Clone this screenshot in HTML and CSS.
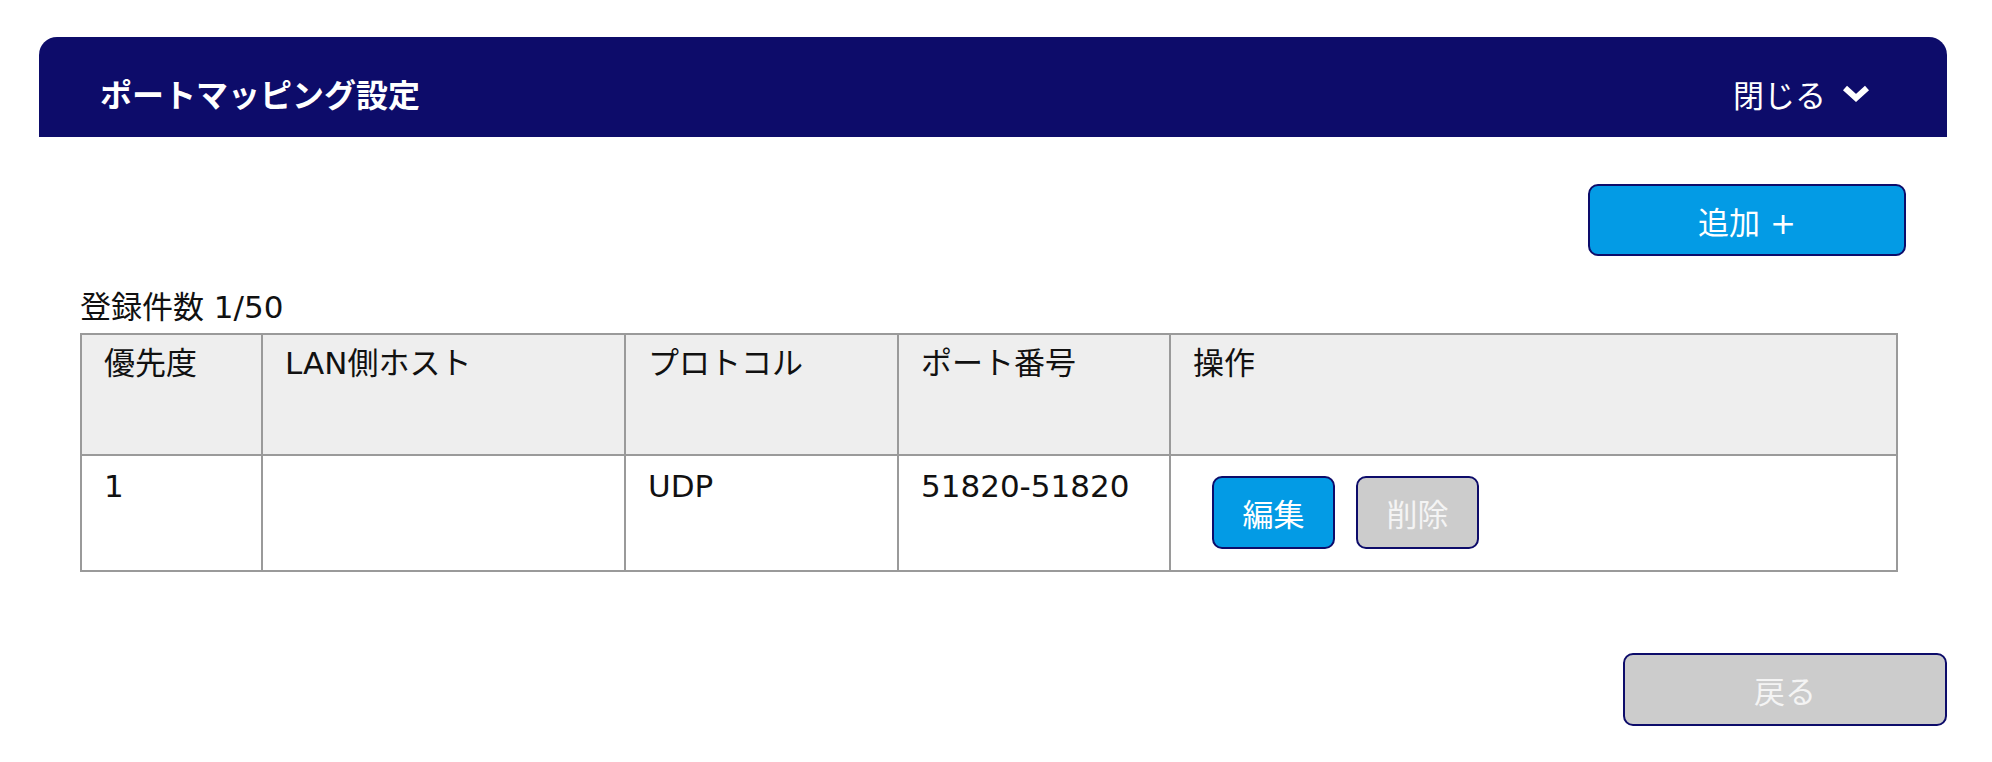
FILE: index.html
```html
<!DOCTYPE html>
<html lang="ja">
<head>
    <meta charset="UTF-8">
    <title>ポートマッピング設定</title>
    <link rel="stylesheet" href="styles.css">
</head>
<body>
    <div class="panel">
        <div class="panel-header">
            <h2 class="panel-title">ポートマッピング設定</h2>
            <button class="close-toggle">
                閉じる
                <svg class="chevron" width="28" height="18" viewBox="0 0 28 18">
                    <polyline points="3,3 14,13 25,3" fill="none" stroke="#fff" stroke-width="6"/>
                </svg>
            </button>
        </div>

        <div class="panel-body">
            <div class="toolbar">
                <button class="btn btn-primary btn-add">追加 +</button>
            </div>

            <p class="count">登録件数 1/50</p>

            <table class="mapping-table">
                <colgroup>
                    <col class="col-priority">
                    <col class="col-host">
                    <col class="col-protocol">
                    <col class="col-port">
                    <col>
                </colgroup>
                <thead>
                    <tr>
                        <th>優先度</th>
                        <th>LAN側ホスト</th>
                        <th>プロトコル</th>
                        <th>ポート番号</th>
                        <th>操作</th>
                    </tr>
                </thead>
                <tbody>
                    <tr>
                        <td>1</td>
                        <td></td>
                        <td>UDP</td>
                        <td>51820-51820</td>
                        <td>
                            <div class="row-actions">
                                <button class="btn btn-primary btn-small">編集</button>
                                <button class="btn btn-disabled btn-small">削除</button>
                            </div>
                        </td>
                    </tr>
                </tbody>
            </table>
        </div>

        <div class="panel-footer">
            <button class="btn btn-disabled btn-back">戻る</button>
        </div>
    </div>
</body>
</html>
```

FILE: styles.css
```css
* {
    margin: 0;
    padding: 0;
    box-sizing: border-box;
}

body {
    background-color: #fff;
    font-family: "DejaVu Sans", "Noto Sans CJK JP", sans-serif;
    color: #111;
}

.panel {
    margin: 37px 45px 0 39px;
}

.panel-header {
    height: 100px;
    background-color: #0d0c6a;
    border-radius: 18px 18px 0 0;
    display: flex;
    justify-content: space-between;
    align-items: center;
    padding: 18px 77px 0 61px;
}

.panel-title {
    color: #fff;
    font-size: 32px;
    font-weight: bold;
    line-height: 40px;
}

.close-toggle {
    background: none;
    border: none;
    color: #fff;
    font-family: inherit;
    font-size: 31px;
    line-height: 40px;
    display: flex;
    align-items: center;
    gap: 16px;
    cursor: pointer;
}

.chevron {
    margin-top: -4px;
}

.panel-body {
    padding: 47px 41px 0 41px;
}

.toolbar {
    display: flex;
    justify-content: flex-end;
}

.btn {
    font-family: inherit;
    font-size: 31px;
    color: #fff;
    border: 2px solid #0d0c6a;
    border-radius: 10px;
    cursor: pointer;
}

.btn-primary {
    background-color: #039be5;
}

.btn-disabled {
    background-color: #cccccc;
    color: #f4f4f4;
}

.btn-add {
    width: 318px;
    height: 72px;
}

.count {
    font-size: 31px;
    line-height: 40px;
    margin-top: 31px;
    margin-bottom: 6px;
}

.mapping-table {
    width: 1818px;
    table-layout: fixed;
    border-collapse: collapse;
    border: 2px solid #9a9a9a;
}

.col-priority {
    width: 181px;
}

.col-host {
    width: 363px;
}

.col-protocol {
    width: 273px;
}

.col-port {
    width: 272px;
}

.mapping-table th,
.mapping-table td {
    border: 2px solid #9a9a9a;
    text-align: left;
    vertical-align: top;
    font-size: 31px;
    line-height: 40px;
    font-weight: normal;
    padding: 8px 22px;
}

.mapping-table th {
    background-color: #eeeeee;
    height: 121px;
}

.mapping-table td {
    padding-top: 10px;
    height: 116px;
}

.row-actions {
    display: flex;
    gap: 21px;
    margin: 10px 0 0 19px;
}

.btn-small {
    width: 123px;
    height: 73px;
}

.panel-footer {
    display: flex;
    justify-content: flex-end;
    margin-top: 81px;
}

.btn-back {
    width: 324px;
    height: 73px;
}
```
